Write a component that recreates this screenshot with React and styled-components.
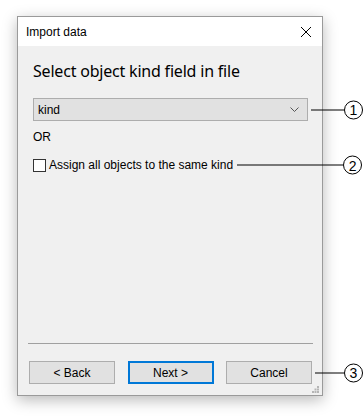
import React from 'react'
import styled, { createGlobalStyle } from 'styled-components'

const GlobalStyle = createGlobalStyle`
  html, body {
    margin: 0;
    padding: 0;
    background: #ffffff;
  }
  body {
    font-family: 'Liberation Sans', Arial, sans-serif;
    color: #000;
  }
`

const Page = styled.div`
  width: 364px;
  height: 418px;
  padding: 16px 0 0 17px;
  box-sizing: border-box;
  position: relative;
  overflow: hidden;
`

const Window = styled.div`
  width: 306px;
  height: 380px;
  box-sizing: border-box;
  border: 1px solid #9a9a9a;
  background: #f0f0f0;
  display: flex;
  flex-direction: column;
  box-shadow: 0 4px 14px rgba(0, 0, 0, 0.28);
  position: relative;
`

const TitleBar = styled.div`
  height: 29px;
  background: #ffffff;
  display: flex;
  align-items: center;
  justify-content: space-between;
  padding: 0 9px 0 8px;
  font-size: 12px;
`

const CloseIcon = styled.svg`
  width: 12px;
  height: 12px;
  margin-right: 1px;
`

const Body = styled.div`
  flex: 1;
  display: flex;
  flex-direction: column;
  padding: 14px 14px 0 15px;
`

const Heading = styled.div`
  font-family: 'Noto Sans', sans-serif;
  font-size: 16px;
  line-height: 22px;
  margin-bottom: 16px;
  letter-spacing: -0.2px;
`

const Anchor = styled.div`
  position: relative;
  align-self: ${p => (p.$stretch ? 'stretch' : 'flex-start')};
`

const Combo = styled.div`
  height: 23px;
  box-sizing: border-box;
  border: 1px solid #adadad;
  background: #e1e1e1;
  display: flex;
  align-items: center;
  justify-content: space-between;
  padding: 0 8px 0 4px;
  font-size: 12px;
`

const Or = styled.div`
  font-size: 12px;
  margin: 9px 0 14px;
`

const CheckRow = styled.label`
  display: flex;
  align-items: center;
  gap: 3px;
  font-size: 12px;
`

const Box = styled.span`
  width: 13px;
  height: 13px;
  box-sizing: border-box;
  border: 1px solid #333;
  background: #fff;
`

const Spacer = styled.div`
  flex: 1;
`

const Separator = styled.div`
  height: 1px;
  background: #a0a0a0;
  margin: 0 -5px 17px -5px;
`

const Footer = styled.div`
  display: flex;
  justify-content: space-between;
  margin: 0 -4px 11px -4px;
`

const Button = styled.div`
  width: 86px;
  height: 23px;
  box-sizing: border-box;
  border: ${p => (p.$default ? '2px solid #0078d7' : '1px solid #adadad')};
  background: #e1e1e1;
  display: flex;
  align-items: center;
  justify-content: center;
  font-size: 12px;
`

const Grip = styled.svg`
  position: absolute;
  right: 3px;
  bottom: 2px;
  width: 7px;
  height: 7px;
`

const Callout = styled.div`
  position: absolute;
  left: calc(100% + ${p => p.$gap}px);
  top: 50%;
  transform: translateY(-50%);
  display: flex;
  align-items: center;
  z-index: 2;
`

const Leader = styled.span`
  width: ${p => p.$len}px;
  height: 1px;
  background: #000;
`

const Badge = styled.span`
  width: 17px;
  height: 17px;
  border: 1px solid #000;
  border-radius: 50%;
  background: #fff;
  display: flex;
  align-items: center;
  justify-content: center;
  font-size: 14px;
  line-height: 1;
  font-family: 'Liberation Sans', sans-serif;
`

const Mark = ({ n, gap, len }) => (
  <Callout $gap={gap}>
    <Leader $len={len} />
    <Badge>{n}</Badge>
  </Callout>
)

export default function App() {
  return (
    <Page>
      <GlobalStyle />
      <Window>
        <TitleBar>
          <span>Import data</span>
          <CloseIcon viewBox="0 0 12 12">
            <path d="M1 1 L11 11 M11 1 L1 11" stroke="#000" strokeWidth="1" fill="none" />
          </CloseIcon>
        </TitleBar>
        <Body>
          <Heading>Select object kind field in file</Heading>
          <Anchor $stretch>
            <Combo>
              <span>kind</span>
              <svg width="9" height="5" viewBox="0 0 9 5">
                <path d="M0.5 0.5 L4.5 4.5 L8.5 0.5" stroke="#555" fill="none" />
              </svg>
            </Combo>
            <Mark n="1" gap={3} len={33} />
          </Anchor>
          <Or>OR</Or>
          <Anchor>
            <CheckRow>
              <Box />
              <span>Assign all objects to the same kind</span>
            </CheckRow>
            <Mark n="2" gap={4} len={106} />
          </Anchor>
          <Spacer />
          <Separator />
          <Footer>
            <Button>&lt; Back</Button>
            <Button $default>Next &gt;</Button>
            <Anchor>
              <Button>Cancel</Button>
              <Mark n="3" gap={3} len={29} />
            </Anchor>
          </Footer>
        </Body>
        <Grip viewBox="0 0 7 7">
          <rect x="5" y="0" width="2" height="2" fill="#b5b5b5" />
          <rect x="2.5" y="2.5" width="2" height="2" fill="#b5b5b5" />
          <rect x="5" y="2.5" width="2" height="2" fill="#b5b5b5" />
          <rect x="0" y="5" width="2" height="2" fill="#b5b5b5" />
          <rect x="2.5" y="5" width="2" height="2" fill="#b5b5b5" />
          <rect x="5" y="5" width="2" height="2" fill="#b5b5b5" />
        </Grip>
      </Window>
    </Page>
  )
}
